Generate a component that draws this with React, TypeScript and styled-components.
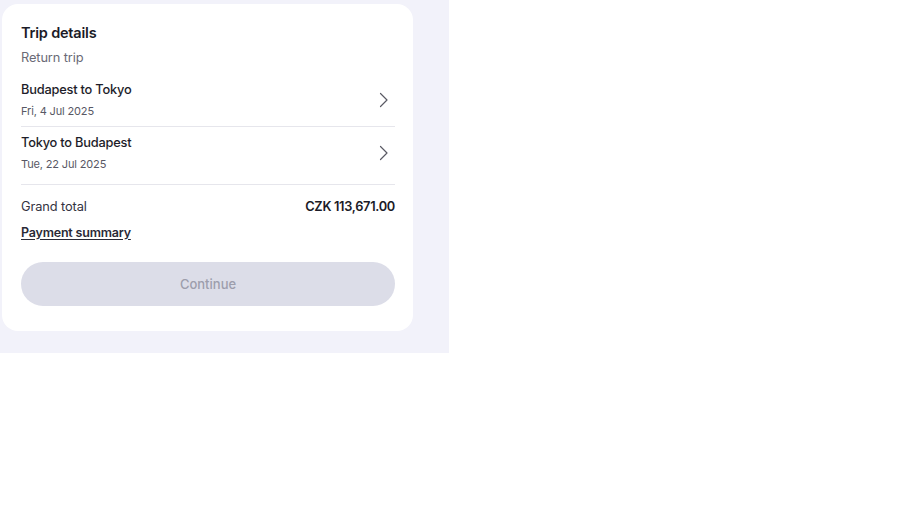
import styled, { createGlobalStyle } from 'styled-components';

interface Leg {
  id: number
  route: string
  date: string
}

const legs: readonly Leg[] = [
  { id: 1, route: 'Budapest to Tokyo', date: 'Fri, 4 Jul 2025' },
  { id: 2, route: 'Tokyo to Budapest', date: 'Tue, 22 Jul 2025' },
];

const GlobalStyle = createGlobalStyle`
  body {
    margin: 0;
    background: #ffffff;
    font-family: Inter, "Noto Sans", "Liberation Sans", sans-serif;
    color: #1d1d29;
  }
`;

const Chevron = () => (
  <svg width="10" height="16" viewBox="0 0 10 16" fill="none">
    <path d="M1.5 1.5 L8 8 L1.5 14.5" stroke="#5a5a64" strokeWidth="1.2" strokeLinecap="round" strokeLinejoin="round" />
  </svg>
);

const App = () => {
  return (
    <>
      <GlobalStyle />
      <Panel>
        <Card>
          <Title>Trip details</Title>
          <Subtitle>Return trip</Subtitle>
          <LegList>
            {
              legs.map(({ id, route, date }) => (
                <LegRow key={id}>
                  <LegText>
                    <LegRoute>{ route }</LegRoute>
                    <LegDate>{ date }</LegDate>
                  </LegText>
                  <Chevron />
                </LegRow>
              ))
            }
          </LegList>
          <Divider />
          <TotalRow>
            <TotalLabel>Grand total</TotalLabel>
            <TotalValue>CZK 113,671.00</TotalValue>
          </TotalRow>
          <SummaryLink href="#">Payment summary</SummaryLink>
          <ContinueButton disabled>Continue</ContinueButton>
        </Card>
      </Panel>
    </>
  );
};

const Panel = styled.div`
  width: 449px;
  box-sizing: border-box;
  padding: 4px 0 22px 2px;
  background: #f2f2fa;
`;

const Card = styled.div`
  width: 411px;
  box-sizing: border-box;
  padding: 19px 18px 25px 19px;
  background: #ffffff;
  border-radius: 16px;
  display: flex;
  flex-direction: column;
`;

const Title = styled.div`
  font-size: 14.5px;
  line-height: 20px;
  font-weight: 600;
  letter-spacing: -0.2px;
  color: #1b1b27;
`;

const Subtitle = styled.div`
  margin-top: 6px;
  font-size: 12.8px;
  line-height: 18px;
  letter-spacing: -0.1px;
  color: #6a6a76;
`;

const LegList = styled.div`
  margin-top: 7px;
  display: flex;
  flex-direction: column;
`;

const LegRow = styled.div`
  display: flex;
  align-items: center;
  justify-content: space-between;
  padding: 7px 6px 7px 0;

  & + & {
    border-top: 1px solid #e6e6ec;
  }
`;

const LegText = styled.div`
  display: flex;
  flex-direction: column;
  gap: 4px;
`;

const LegRoute = styled.div`
  font-size: 12.8px;
  line-height: 18px;
  font-weight: 550;
  letter-spacing: -0.2px;
  color: #1d1d29;
`;

const LegDate = styled.div`
  font-size: 11px;
  line-height: 16px;
  letter-spacing: -0.15px;
  color: #585864;
`;

const Divider = styled.div`
  margin-top: 5px;
  height: 1px;
  background: #e6e6ec;
`;

const TotalRow = styled.div`
  margin-top: 13px;
  display: flex;
  justify-content: space-between;
  align-items: center;
  font-size: 12.8px;
  line-height: 18px;
  letter-spacing: -0.1px;
`;

const TotalLabel = styled.span`
  color: #33333f;
`;

const TotalValue = styled.span`
  font-weight: 600;
  letter-spacing: -0.3px;
  color: #1b1b27;
`;

const SummaryLink = styled.a`
  align-self: flex-start;
  margin-top: 8px;
  font-size: 12.5px;
  line-height: 18px;
  font-weight: 600;
  letter-spacing: -0.2px;
  color: #2a2a36;
  text-decoration: underline;
  text-underline-offset: 2px;
`;

const ContinueButton = styled.button`
  margin-top: 20px;
  height: 44px;
  border: none;
  border-radius: 22px;
  background: #dcdde8;
  color: #9d9eac;
  font-family: inherit;
  font-size: 13px;
  font-weight: 500;
`;

export default App;
